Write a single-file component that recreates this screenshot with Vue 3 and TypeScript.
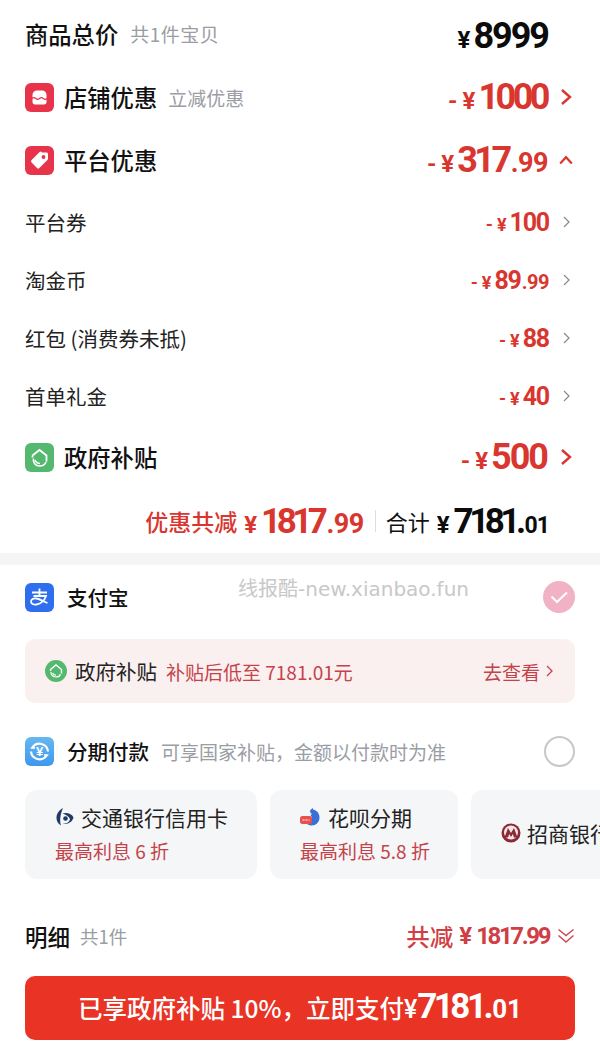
<script setup lang="ts">
interface SubRow {
  label: string
  int: string
  dec?: string
}

const subRows: SubRow[] = [
  { label: '平台券', int: '100' },
  { label: '淘金币', int: '89', dec: '.99' },
  { label: '红包 (消费券未抵)', int: '88' },
  { label: '首单礼金', int: '40' }
]
</script>

<template>
  <div class="page">
    <div class="watermark">线报酷-new.xianbao.fun</div>

    <!-- Price summary -->
    <section class="summary">
      <div class="row row-total">
        <span class="title">商品总价</span>
        <span class="hint">共1件宝贝</span>
        <span class="amount amount-black amount-total">
          <i class="yen">¥</i><b class="big">8999</b>
        </span>
      </div>

      <div class="row row-store">
        <svg class="sq-icon" viewBox="0 0 29 29">
          <rect width="29" height="29" rx="6" fill="#e8344a" />
          <path d="M7.500 12c0-2.800 2-4.500 4.500-4.500h5c2.500 0 4.500 1.700 4.500 4.500v7c0 1.500-1 2.500-2.500 2.500h-9C8.500 21.500 7.500 20.500 7.500 19z" fill="#fff" />
          <path d="M7 15.500c1.300-1.200 2.500-1.200 3.700 0s2.500 1.200 3.800 0 2.500-1.200 3.800 0 2.500 1.200 3.700 0" fill="none" stroke="#e8344a" stroke-width="1.100" />
        </svg>
        <span class="title">店铺优惠</span>
        <span class="hint hint-store">立减优惠</span>
        <span class="amount">
          <i class="minus">-</i><i class="yen">¥</i><b class="big tight">1000</b>
        </span>
        <svg class="chev" viewBox="0 0 12 18">
          <path d="M2 2l8 7-8 7" fill="none" stroke="#d8362f" stroke-width="2.400" />
        </svg>
      </div>

      <div class="row row-platform">
        <svg class="sq-icon" viewBox="0 0 29 29">
          <rect width="29" height="29" rx="6" fill="#e8344a" />
          <path d="M17 6.500h4.500c.9 0 1.500.6 1.500 1.500v4.500c0 .6-.2 1-.6 1.400l-8 8c-.7.700-1.700.700-2.400 0l-5.400-5.400c-.7-.7-.7-1.700 0-2.400l8-8c.400-.4.800-.6 1.400-.6z" fill="#fff" />
          <circle cx="18.500" cy="11" r="1.900" fill="#e8344a" />
        </svg>
        <span class="title">平台优惠</span>
        <span class="amount">
          <i class="minus">-</i><i class="yen">¥</i><b class="big tight">317</b><b class="dec">.99</b>
        </span>
        <svg class="chev chev-up" viewBox="0 0 14 10">
          <path d="M1.200 8.500L7 2.200l5.800 6.300" fill="none" stroke="#d8362f" stroke-width="2.200" />
        </svg>
      </div>

      <div v-for="sub in subRows" :key="sub.label" class="row row-sub">
        <span class="sub-label">{{ sub.label }}</span>
        <span class="amount amount-sub">
          <i class="minus">-</i><i class="yen">¥</i><b class="big">{{ sub.int }}</b><b v-if="sub.dec" class="dec">{{ sub.dec }}</b>
        </span>
        <svg class="chev-small" viewBox="0 0 7 12">
          <path d="M1 1l5 5-5 5" fill="none" stroke="#888" stroke-width="1.200" />
        </svg>
      </div>

      <div class="row row-gov">
        <svg class="sq-icon" viewBox="0 0 29 29">
          <rect width="29" height="29" rx="6" fill="#54b96e" />
          <path d="M7.500 12.500l7-5.500 7 5.500v6M7.500 12.500v2" fill="none" stroke="#fff" stroke-width="1.800" />
          <path d="M8.500 15.500c-1 4 2 7.500 6 7.500 3 0 5.500-1.500 6.500-4M10 17c1 2.500 3 3.500 5 3.500" fill="none" stroke="#fff" stroke-width="1.600" />
        </svg>
        <span class="title">政府补贴</span>
        <span class="amount">
          <i class="minus">-</i><i class="yen">¥</i><b class="big">500</b>
        </span>
        <svg class="chev" viewBox="0 0 12 18">
          <path d="M2 2l8 7-8 7" fill="none" stroke="#d8362f" stroke-width="2.400" />
        </svg>
      </div>

      <div class="row row-sum">
        <span class="sum-label">优惠共减</span>
        <span class="amount amount-sum">
          <i class="yen">¥</i><b class="big tight">1817</b><b class="dec">.99</b>
        </span>
        <span class="divider"></span>
        <span class="sum-total">合计</span>
        <span class="amount amount-sum amount-black">
          <i class="yen">¥</i><b class="big tight">7181.</b><b class="dec dec-small">01</b>
        </span>
      </div>
    </section>

    <div class="band"></div>

    <!-- Payment methods -->
    <section class="pay">
      <div class="row row-alipay">
        <svg class="sq-icon" viewBox="0 0 29 29">
          <rect width="29" height="29" rx="6" fill="#2f6fed" />
          <path d="M14.500 5.500v7M7 9.500h15M8.500 13h12.500c-1.500 4.500-5 7.800-9.500 8.500-3 .4-5.500-.8-5.500-3s2.500-3.500 5.500-3c3.500.5 7 3 11 4.500" fill="none" stroke="#fff" stroke-width="1.800" />
        </svg>
        <span class="pay-name">支付宝</span>
        <svg class="radio" viewBox="0 0 32 32">
          <circle cx="16" cy="16" r="16" fill="#f0b2c4" />
          <path d="M8.500 15.500l5.500 5.500 10-9.500" fill="none" stroke="#fff" stroke-width="2" />
        </svg>
      </div>

      <div class="banner">
        <svg class="round-icon" viewBox="0 0 22 22">
          <circle cx="11" cy="11" r="11" fill="#54b96e" />
          <path d="M5.500 9.500L11 5l5.500 4.500v4M5.500 9.500v1.500" fill="none" stroke="#fff" stroke-width="1.400" />
          <path d="M6 12c-.5 2.800 2 5 5 5 2 0 3.800-1 4.500-2.800M7.500 13c.8 1.500 2 2.200 3.500 2.200" fill="none" stroke="#fff" stroke-width="1.200" />
        </svg>
        <span class="banner-title">政府补贴</span>
        <span class="banner-note">补贴后低至 7181.01元</span>
        <span class="banner-link">去查看</span>
        <svg class="banner-chev" viewBox="0 0 7 12">
          <path d="M1 1l5 5-5 5" fill="none" stroke="#c4434a" stroke-width="1.300" />
        </svg>
      </div>

      <div class="row row-installment">
        <svg class="sq-icon" viewBox="0 0 29 29">
          <defs>
            <linearGradient id="instBg" x1="0" y1="0" x2="0" y2="1">
              <stop offset="0" stop-color="#67b8ef" />
              <stop offset="1" stop-color="#3f97ee" />
            </linearGradient>
          </defs>
          <rect width="29" height="29" rx="6" fill="url(#instBg)" />
          <path d="M7.500 10.500A8.500 8.500 0 0 1 23 14.500M21.500 18.500A8.500 8.500 0 0 1 6 14.500" fill="none" stroke="#fff" stroke-width="2.200" />
          <path d="M5 11.500l5 .5-1-4.500zM24 17.500l-5-.5 1 4.500z" fill="#fff" />
          <text x="14.500" y="19" text-anchor="middle" class="inst-yen">¥</text>
        </svg>
        <span class="pay-name">分期付款</span>
        <span class="inst-note">可享国家补贴，金额以付款时为准</span>
        <span class="radio-empty"></span>
      </div>

      <div class="cards">
        <div class="card card-bocom">
          <div class="card-head">
            <svg class="bank-icon" viewBox="0 0 20 20">
              <path d="M8 1C3.500 3.500 1.500 7 1.500 11c0 3 1.500 6 4.500 7.500C4.500 14 5 8 8 1z" fill="#1f3a63" />
              <path d="M7.500 6.500c4-1.500 9.500 0 11 4-1 4.500-6 7.500-11 6 3.500.5 7-1 7.500-4.500C14 9.500 11 7.500 7.500 6.500z" fill="#1f3a63" />
              <circle cx="10.500" cy="11.500" r="2.300" fill="#1f3a63" />
            </svg>
            <span>交通银行信用卡</span>
          </div>
          <div class="card-note">最高利息 6 折</div>
        </div>
        <div class="card card-huabei">
          <div class="card-head">
            <svg class="bank-icon" viewBox="0 0 20 20">
              <path d="M10 3.500l2.500-2.500 1 1.800C17 3.500 19.500 6.500 19.500 10.500c0 4.500-3.500 8-8 8-2.500 0-4.500-1-5.500-3 2.500 0 5-.5 5.500-3 .5-2 0-3-1-4.500 1-.500 1.500-1 1.500-1.500-1 .2-1.700 0-2-3z" fill="#3b6fd8" />
              <rect x="0" y="9" width="12" height="8" rx="2.500" fill="#e8504f" />
              <path d="M2.500 13h7" stroke="#fff" stroke-width="1.200" stroke-dasharray="2 1" />
            </svg>
            <span>花呗分期</span>
          </div>
          <div class="card-note">最高利息 5.8 折</div>
        </div>
        <div class="card card-cmb">
          <div class="card-head">
            <svg class="bank-icon" viewBox="0 0 20 20">
              <circle cx="10" cy="10" r="9.500" fill="#8b2a35" />
              <circle cx="10" cy="9.500" r="7" fill="#f3e6e8" />
              <path d="M3.500 14.500L7 5l3 5 3-5 3.500 9.500H13l-1.200-3.500L10 14l-1.800-3L7 14.500z" fill="#8b2a35" />
            </svg>
            <span>招商银行</span>
          </div>
        </div>
      </div>

      <div class="row row-detail">
        <span class="detail-title">明细</span>
        <span class="detail-count">共1件</span>
        <span class="detail-sum">共减</span>
        <span class="detail-yen">¥</span>
        <span class="detail-amount">1817.99</span>
        <svg class="double-chev" viewBox="0 0 18 16">
          <path d="M1.500 1.500l7.500 6 7.500-6M1.500 7.500l7.500 6.500 7.500-6.500" fill="none" stroke="#cf4a50" stroke-width="1.500" />
        </svg>
      </div>

      <button class="pay-btn">
        已享政府补贴 10%，立即支付<i class="btn-yen">¥</i><b class="btn-big">7181.</b><b class="btn-dec">01</b>
      </button>
    </section>
  </div>
</template>

<style>
html,
body {
  margin: 0;
  background: #fff;
}
</style>

<style scoped>
.page {
  position: relative;
  width: 600px;
  height: 1051px;
  overflow: hidden;
  background: #fff;
  font-family: "Noto Sans CJK SC", "Liberation Sans", sans-serif;
  color: #111;
}

.watermark {
  position: absolute;
  top: 573px;
  left: 238px;
  font-family: "DejaVu Sans", "Noto Sans CJK SC", sans-serif;
  font-size: 20px;
  color: #c8c8c8;
  white-space: nowrap;
  z-index: 2;
}

.row {
  display: flex;
  align-items: center;
  padding: 0 25px;
}

.row-total { height: 67px; padding-right: 52px; }
.row-store { height: 60px; padding-right: 28px; }
.row-platform { height: 66px; padding-right: 27px; }
.row-sub { height: 58px; padding-right: 30px; }
.row-gov { height: 64px; padding-right: 28px; }
.row-sum { height: 64px; justify-content: flex-end; padding-right: 51px; }

.sq-icon {
  width: 29px;
  height: 29px;
  flex-shrink: 0;
  margin-right: 10px;
}

.title {
  font-size: 23.300px;
  font-weight: 500;
}

.hint {
  font-size: 19px;
  letter-spacing: 0.500px;
  color: #9a9da3;
  margin-left: 12px;
}

.hint-store {
  letter-spacing: 0;
  margin-left: 11px;
}

.amount {
  margin-left: auto;
  display: flex;
  align-items: baseline;
  color: #d8362f;
  font-family: Roboto, "Liberation Sans", sans-serif;
  line-height: 1;
}

.amount i {
  font-style: normal;
}

.amount-total {
  margin-top: 4px;
}

.amount .minus {
  font-size: 24px;
  font-weight: 700;
  margin-right: 5px;
}

.amount .yen {
  font-size: 24px;
  font-weight: 700;
  margin-right: 3px;
}

.amount .big {
  font-size: 36px;
  font-weight: 700;
  letter-spacing: -2px;
}

.amount .tight {
  letter-spacing: -3.500px;
}

.amount .tight:last-child {
  margin-right: 2px;
}

.amount .dec {
  font-size: 27px;
  font-weight: 700;
  letter-spacing: -0.500px;
  margin-left: 2px;
}

.amount-black {
  color: #0c0c0c;
}

.chev {
  width: 12px;
  height: 18px;
  margin-left: 11px;
}

.row-gov .chev {
  margin-left: 13px;
}

.chev-up {
  width: 14px;
  height: 10px;
  margin-left: 11px;
}

.sub-label {
  font-size: 20.500px;
  color: #222;
}

.amount-sub .minus,
.amount-sub .yen {
  font-size: 18px;
}

.amount-sub .minus { margin-right: 4px; }

.amount-sub .big {
  font-size: 25px;
  letter-spacing: -1.200px;
}

.amount-sub .dec {
  font-size: 20px;
  margin-left: 1px;
}

.chev-small {
  width: 7px;
  height: 12px;
  margin-left: 14px;
}

.sum-label {
  font-size: 23px;
  font-weight: 500;
  color: #d8362f;
  margin-right: 7px;
}

.amount-sum {
  margin-left: 0;
}

.amount-sum .yen {
  margin-right: 4px;
}

.amount-sum .big {
  font-size: 35px;
  letter-spacing: -4.500px;
}

.amount-sum .dec {
  font-size: 27px;
  margin-left: 3px;
}

.amount-sum .dec-small {
  font-size: 23px;
  letter-spacing: -1px;
}

.divider {
  width: 1px;
  height: 22px;
  background: #ddd;
  margin: 0 10px 0 11px;
}

.sum-total {
  font-size: 22px;
  margin-right: 7px;
}

.band {
  height: 12px;
  background: #f5f5f5;
}

.row-alipay { height: 64px; padding-right: 25px; }

.pay-name {
  font-size: 20.500px;
  font-weight: 500;
  margin-left: 3px;
}

.radio {
  width: 32px;
  height: 32px;
  margin-left: auto;
}

.banner {
  display: flex;
  align-items: center;
  height: 64px;
  margin: 10px 25px 0;
  padding: 0 22px 0 20px;
  background: #fbf0f0;
  border-radius: 10px;
}

.round-icon {
  width: 22px;
  height: 22px;
  margin-right: 8px;
}

.banner-title {
  font-size: 20.500px;
  color: #222;
}

.banner-note {
  font-size: 19px;
  color: #c4434a;
  margin-left: 9px;
}

.banner-link {
  font-size: 19px;
  color: #c4434a;
  margin-left: auto;
}

.banner-chev {
  width: 7px;
  height: 12px;
  margin-left: 6px;
}

.row-installment {
  height: 48px;
  margin-top: 24px;
  padding-right: 25px;
}

.inst-yen {
  font-family: "Liberation Sans", sans-serif;
  font-size: 13px;
  font-weight: 700;
  fill: #fff;
}

.inst-note {
  font-size: 19px;
  color: #9a9da3;
  margin-left: 12px;
  white-space: nowrap;
}

.radio-empty {
  width: 27px;
  height: 27px;
  margin-left: auto;
  border: 2.500px solid #c8c8c8;
  border-radius: 50%;
}

.cards {
  display: flex;
  gap: 13px;
  margin-top: 15px;
  padding-left: 25px;
  height: 89px;
  overflow: hidden;
}

.card {
  flex-shrink: 0;
  display: flex;
  flex-direction: column;
  justify-content: center;
  padding: 0 30px 3px;
  box-sizing: border-box;
  background: #f5f6f8;
  border-radius: 12px;
}

.card-bocom { width: 232px; }
.card-huabei { width: 188px; }
.card-cmb { width: 240px; }

.card-head {
  display: flex;
  align-items: center;
  font-size: 21px;
  color: #222;
  white-space: nowrap;
}

.bank-icon {
  width: 20px;
  height: 20px;
  margin-right: 6px;
  flex-shrink: 0;
}

.card-huabei .bank-icon {
  margin-right: 8px;
}

.card-note {
  font-size: 19px;
  color: #c4434a;
  margin-top: 5px;
  line-height: 27px;
  white-space: nowrap;
}

.row-detail {
  height: 72px;
  margin-top: 21px;
}

.detail-title {
  font-size: 22.500px;
  font-weight: 500;
}

.detail-count {
  font-size: 18.500px;
  color: #9a9da3;
  margin-left: 10px;
}

.detail-sum {
  margin-left: auto;
  font-size: 23.500px;
  font-weight: 500;
  color: #cf3f45;
}

.detail-yen,
.detail-amount {
  font-family: Roboto, "Liberation Sans", sans-serif;
  font-weight: 700;
  color: #cf3f45;
}

.detail-yen {
  font-size: 24px;
  margin-left: 6px;
}

.detail-amount {
  font-size: 24px;
  margin-left: 4px;
  letter-spacing: -2.400px;
}

.double-chev {
  width: 18px;
  height: 16px;
  margin-left: 8px;
}

.pay-btn {
  display: flex;
  align-items: baseline;
  justify-content: center;
  width: 550px;
  height: 64px;
  margin: 4px 25px 0;
  padding: 10px 0 0;
  box-sizing: border-box;
  border: 0;
  border-radius: 10px;
  background: #e93325;
  color: #fff;
  font-family: inherit;
  font-size: 24.500px;
  font-weight: 500;
  white-space: nowrap;
}

.btn-yen {
  font-style: normal;
  font-family: Roboto, sans-serif;
  font-weight: 500;
  font-size: 25px;
}

.btn-big {
  font-family: Roboto, sans-serif;
  font-size: 35px;
  letter-spacing: -3.500px;
}

.btn-dec {
  font-family: Roboto, sans-serif;
  font-size: 26px;
  font-weight: 700;
  margin-left: 2px;
}
</style>
